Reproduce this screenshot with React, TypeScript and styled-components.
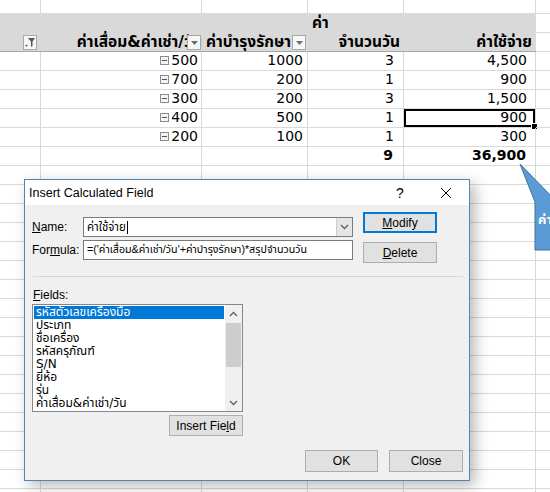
import React from 'react';
import styled, { createGlobalStyle } from 'styled-components';

const GlobalStyle = createGlobalStyle`
  html, body {
    margin: 0;
    padding: 0;
    background: #ffffff;
    overflow: hidden;
  }
  body {
    width: 550px;
    height: 492px;
    position: relative;
  }
`;

const SHEET_FONT = `"DejaVu Sans", Tahoma, "Noto Sans Thai", "Noto Sans", sans-serif`;
const UI_FONT = `"Liberation Sans", "Noto Sans Thai", "Noto Sans", Arial, sans-serif`;

// sheet 550 * 492
const Sheet = styled.div`
  display: grid;
  grid-template-columns: 41px 161px 106px 96px 132px 60px;
  grid-template-rows: 14px repeat(26, 19px);
  width: 550px;
  height: 492px;
  overflow: hidden;
  font-family: ${SHEET_FONT};
  font-size: 14px;
  color: #000;
`;

const Cell = styled.div<{ $align?: 'left' | 'right'; $pad?: number; $bold?: boolean }>`
  position: relative;
  box-sizing: border-box;
  border-right: 1px solid #d9d9d9;
  border-bottom: 1px solid #d9d9d9;
  display: flex;
  align-items: flex-end;
  justify-content: ${(p) => (p.$align === 'left' ? 'flex-start' : 'flex-end')};
  padding: 0 ${(p) => p.$pad ?? 3}px 1px 3px;
  font-weight: ${(p) => (p.$bold ? 700 : 400)};
  white-space: nowrap;
  overflow: hidden;
  line-height: 17px;
`;

const HeadCell = styled.div<{ $align?: 'left' | 'right'; $pad?: number }>`
  position: relative;
  grid-row: span 2;
  box-sizing: border-box;
  background: #d9d9d9;
  border-bottom: 1px solid #a6a6a6;
  display: flex;
  flex-direction: column;
  justify-content: space-between;
  align-items: ${(p) => (p.$align === 'left' ? 'flex-start' : 'flex-end')};
  padding: 0 ${(p) => p.$pad ?? 3}px 0 4px;
  font-weight: 700;
  font-size: 15.5px;
  white-space: nowrap;
  overflow: hidden;
  line-height: 18px;
`;

const HeadLine = styled.span<{ $self?: 'left' | 'right' }>`
  align-self: ${(p) => (p.$self === 'left' ? 'flex-start' : p.$self === 'right' ? 'flex-end' : 'auto')};
`;

const DropButton = styled.span<{ $left: number }>`
  position: absolute;
  left: ${(p) => p.$left}px;
  bottom: 1px;
  width: 14px;
  height: 15px;
  box-sizing: border-box;
  background: #f7f7f7;
  border: 1px solid #a9a9a9;
  display: flex;
  align-items: center;
  justify-content: center;
`;

const Collapse = styled.span`
  display: inline-block;
  width: 9px;
  height: 9px;
  box-sizing: border-box;
  border: 1px solid #8c8c8c;
  background: #f4f4f4;
  margin-right: 2px;
  margin-bottom: 4px;
  position: relative;
  &::after {
    content: '';
    position: absolute;
    left: 1px;
    right: 1px;
    top: 3px;
    height: 1px;
    background: #555;
  }
`;

const Selected = styled(Cell)`
  box-shadow: inset 0 0 0 2px #000;
  overflow: visible;
  &::after {
    content: '';
    position: absolute;
    right: -3px;
    bottom: -3px;
    width: 5px;
    height: 5px;
    background: #000;
    border: 1px solid #fff;
  }
`;

// dialog
const Dialog = styled.div`
  position: absolute;
  left: 24px;
  top: 179px;
  width: 446px;
  height: 302px;
  box-sizing: border-box;
  border: 1px solid #4f86b8;
  background: #f0f0f0;
  box-shadow: 5px 5px 14px rgba(0, 0, 0, 0.28);
  font-family: ${UI_FONT};
  font-size: 12px;
  color: #000;
  display: flex;
  flex-direction: column;
`;

const TitleBar = styled.div`
  height: 25px;
  background: #ffffff;
  display: flex;
  align-items: center;
  padding-left: 4px;
  font-size: 12.5px;
`;

const TitleText = styled.span`
  flex: 1;
`;

const TitleButton = styled.span`
  width: 46px;
  height: 25px;
  display: flex;
  align-items: center;
  justify-content: center;
  font-size: 14px;
`;

const Body = styled.div`
  flex: 1;
  display: flex;
  flex-direction: column;
  padding: 0 6px 8px 7px;
`;

const TopArea = styled.div`
  display: flex;
`;

const FieldsCol = styled.div`
  display: flex;
  flex-direction: column;
  gap: 3px;
  padding-top: 12px;
`;

const ButtonCol = styled.div`
  display: flex;
  flex-direction: column;
  gap: 9px;
  padding-top: 7px;
  margin-left: 10px;
`;

const FieldRow = styled.div`
  display: flex;
  align-items: center;
`;

const Label = styled.span`
  width: 51px;
  line-height: 15px;
  u {
    text-decoration: underline;
  }
`;

const TextBox = styled.div<{ $h: number; $size?: number }>`
  width: 270px;
  height: ${(p) => p.$h}px;
  box-sizing: border-box;
  border: 1px solid #7a7a7a;
  background: #fff;
  display: flex;
  align-items: center;
  padding-left: 3px;
  font-size: ${(p) => p.$size ?? 11.5}px;
  white-space: nowrap;
  overflow: hidden;
`;

const ComboText = styled.span`
  flex: 1;
  display: flex;
  align-items: center;
`;

const Caret = styled.span`
  width: 1px;
  height: 13px;
  background: #000;
  margin-left: 1px;
`;

const ComboArrow = styled.span`
  width: 16px;
  height: 18px;
  box-sizing: border-box;
  background: #e5e5e5;
  border-left: 1px solid #cfcfcf;
  display: flex;
  align-items: center;
  justify-content: center;
`;

const Button = styled.div<{ $default?: boolean; $w?: number; $h?: number }>`
  width: ${(p) => p.$w ?? 74}px;
  height: ${(p) => p.$h ?? 21}px;
  box-sizing: border-box;
  background: #e1e1e1;
  border: ${(p) => (p.$default ? '2px solid #0078d7' : '1px solid #adadad')};
  display: flex;
  align-items: center;
  justify-content: center;
  font-size: 12px;
  u {
    text-decoration: underline;
  }
`;

const Separator = styled.div`
  margin-top: 13px;
  margin-left: 1px;
  height: 0;
  border-top: 1px solid #d7d7d7;
`;

const FieldsLabel = styled.div`
  margin-top: 11px;
  line-height: 15px;
  padding-left: 1px;
`;

const ListArea = styled.div`
  width: 211px;
  display: flex;
  flex-direction: column;
  align-items: flex-end;
`;

const ListBox = styled.div`
  margin-top: 1px;
  width: 211px;
  height: 108px;
  box-sizing: border-box;
  border: 1px solid #828790;
  background: #fff;
  display: flex;
`;

const Items = styled.div`
  flex: 1;
  padding: 1px 1px 0 1px;
  font-family: ${SHEET_FONT};
  font-size: 12px;
  overflow: hidden;
`;

const Item = styled.div<{ $active?: boolean }>`
  height: 13px;
  line-height: 13px;
  padding-left: 2px;
  white-space: nowrap;
  background: ${(p) => (p.$active ? '#0078d7' : 'transparent')};
  color: ${(p) => (p.$active ? '#fff' : '#000')};
`;

const ScrollBar = styled.div`
  width: 17px;
  background: #f0f0f0;
  display: flex;
  flex-direction: column;
  align-items: center;
`;

const ScrollArrow = styled.div`
  height: 17px;
  width: 17px;
  display: flex;
  align-items: center;
  justify-content: center;
`;

const ScrollSpace = styled.div`
  flex: 1;
`;

const Thumb = styled.div`
  width: 15px;
  height: 44px;
  background: #cdcdcd;
  margin-top: 1px;
`;

const InsertRow = styled.div`
  margin-top: 3px;
`;

const Footer = styled.div`
  margin-top: auto;
  display: flex;
  justify-content: flex-end;
  gap: 11px;
`;

// callout
const Callout = styled.div`
  position: absolute;
  left: 510px;
  top: 155px;
  width: 40px;
  height: 100px;
  overflow: hidden;
`;

const CalloutText = styled.span`
  position: absolute;
  left: 28px;
  top: 55px;
  color: #fff;
  font-family: ${SHEET_FONT};
  font-size: 13px;
  font-weight: 700;
  white-space: nowrap;
`;

const Chevron = ({ up }: { up?: boolean }) => (
  <svg width="9" height="6" viewBox="0 0 9 6">
    <path d={up ? 'M1 5 L4.5 1.5 L8 5' : 'M1 1 L4.5 4.5 L8 1'} fill="none" stroke="#606060" strokeWidth="1.3" />
  </svg>
);

const Tri = () => (
  <svg width="7" height="4" viewBox="0 0 7 4">
    <path d="M0 0 L7 0 L3.5 4 Z" fill="#6d6d6d" />
  </svg>
);

const Funnel = () => (
  <svg width="12" height="11" viewBox="0 0 12 11">
    <path d="M4 1 H11 L8.5 4.5 V9 L7 10 V4.5 Z" fill="#555" />
    <path d="M1 8 H4 L2.5 9.8 Z" fill="#555" />
  </svg>
);

const rows = [
  { b: '500', c: '1000', d: '3', e: '4,500' },
  { b: '700', c: '200', d: '1', e: '900' },
  { b: '300', c: '200', d: '3', e: '1,500' },
  { b: '400', c: '500', d: '1', e: '900' },
  { b: '200', c: '100', d: '1', e: '300' },
];

const fields = [
  'รหัสตัวเลขเครื่องมือ',
  'ประเภท',
  'ชื่อเครื่อง',
  'รหัสครุภัณฑ์',
  'S/N',
  'ยี่ห้อ',
  'รุ่น',
  'ค่าเสื่อม&ค่าเช่า/วัน',
];

const EmptyRow = () => (
  <>
    {Array.from({ length: 6 }).map((_, i) => (
      <Cell key={i} />
    ))}
  </>
);

const App = () => {
  return (
    <>
      <GlobalStyle />
      <Sheet>
        <EmptyRow />

        <HeadCell>
          <DropButton $left={23}>
            <Funnel />
          </DropButton>
        </HeadCell>
        <HeadCell $pad={0}>
          <span />
          <HeadLine>ค่าเสื่อม&amp;ค่าเช่า/วัน</HeadLine>
          <DropButton $left={146}>
            <Tri />
          </DropButton>
        </HeadCell>
        <HeadCell $align="left">
          <span />
          <HeadLine>ค่าบำรุงรักษา</HeadLine>
          <DropButton $left={90}>
            <Tri />
          </DropButton>
        </HeadCell>
        <HeadCell $pad={4}>
          <HeadLine $self="left">ค่า</HeadLine>
          <HeadLine>จำนวนวัน</HeadLine>
        </HeadCell>
        <HeadCell $pad={4}>
          <span />
          <HeadLine>ค่าใช้จ่าย</HeadLine>
        </HeadCell>
        <Cell />
        <Cell />

        {rows.map((r, i) => (
          <React.Fragment key={i}>
            <Cell />
            <Cell>
              <Collapse />
              {r.b}
            </Cell>
            <Cell $pad={4}>{r.c}</Cell>
            <Cell $pad={9}>{r.d}</Cell>
            {i === 3 ? <Selected $pad={8}>{r.e}</Selected> : <Cell $pad={8}>{r.e}</Cell>}
            <Cell />
          </React.Fragment>
        ))}

        <Cell />
        <Cell />
        <Cell />
        <Cell $pad={10} $bold>
          9
        </Cell>
        <Cell $pad={9} $bold>
          36,900
        </Cell>
        <Cell />

        {Array.from({ length: 18 }).map((_, i) => (
          <EmptyRow key={i} />
        ))}
      </Sheet>

      <Callout>
        <svg width="50" height="100" viewBox="0 0 50 100">
          <path d="M10 9 L25 47 L25 95 L60 95 L60 47 L47 47 Z" fill="#5b9bd5" stroke="#41719c" strokeWidth="1" />
        </svg>
        <CalloutText>ค่าใช้จ่าย</CalloutText>
      </Callout>

      <Dialog>
        <TitleBar>
          <TitleText>Insert Calculated Field</TitleText>
          <TitleButton>?</TitleButton>
          <TitleButton>
            <svg width="12" height="12" viewBox="0 0 12 12">
              <path d="M1 1 L11 11 M11 1 L1 11" stroke="#000" strokeWidth="1" />
            </svg>
          </TitleButton>
        </TitleBar>
        <Body>
          <TopArea>
            <FieldsCol>
              <FieldRow>
                <Label>
                  <u>N</u>ame:
                </Label>
                <TextBox $h={20}>
                  <ComboText>
                    ค่าใช้จ่าย
                    <Caret />
                  </ComboText>
                  <ComboArrow>
                    <Chevron />
                  </ComboArrow>
                </TextBox>
              </FieldRow>
              <FieldRow>
                <Label>
                  For<u>m</u>ula:
                </Label>
                <TextBox $h={20} $size={10.7}>
                  =('ค่าเสื่อม&amp;ค่าเช่า/วัน'+ค่าบำรุงรักษา)*สรุปจำนวนวัน
                </TextBox>
              </FieldRow>
            </FieldsCol>
            <ButtonCol>
              <Button $default>
                <span>
                  <u>M</u>odify
                </span>
              </Button>
              <Button>
                <span>
                  <u>D</u>elete
                </span>
              </Button>
            </ButtonCol>
          </TopArea>

          <Separator />
          <FieldsLabel>
            <u>F</u>ields:
          </FieldsLabel>
          <ListArea>
            <ListBox>
              <Items>
                {fields.map((f, i) => (
                  <Item key={f} $active={i === 0}>
                    {f}
                  </Item>
                ))}
              </Items>
              <ScrollBar>
                <ScrollArrow>
                  <Chevron up />
                </ScrollArrow>
                <Thumb />
                <ScrollSpace />
                <ScrollArrow>
                  <Chevron />
                </ScrollArrow>
              </ScrollBar>
            </ListBox>
            <InsertRow>
              <Button>
                <span>
                  Insert Fie<u>l</u>d
                </span>
              </Button>
            </InsertRow>
          </ListArea>

          <Footer>
            <Button $w={73} $h={22}>
              OK
            </Button>
            <Button $h={22}>Close</Button>
          </Footer>
        </Body>
      </Dialog>
    </>
  );
};

export default App;
